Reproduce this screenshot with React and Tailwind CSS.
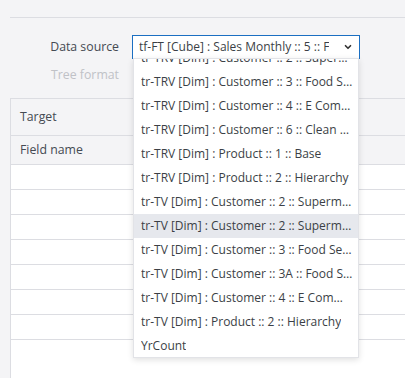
import { ChevronDown } from 'lucide-react'

const options = [
  'tr-TRV [Dim] : Customer :: 2 :: Supermarket',
  'tr-TRV [Dim] : Customer :: 3 :: Food Service',
  'tr-TRV [Dim] : Customer :: 4 :: E Commerce',
  'tr-TRV [Dim] : Customer :: 6 :: Clean Label',
  'tr-TRV [Dim] : Product :: 1 :: Base',
  'tr-TRV [Dim] : Product :: 2 :: Hierarchy',
  'tr-TV [Dim] : Customer :: 2 :: Supermarket',
  'tr-TV [Dim] : Customer :: 2 :: Supermarket A',
  'tr-TV [Dim] : Customer :: 3 :: Food Service',
  'tr-TV [Dim] : Customer :: 3A :: Food Service',
  'tr-TV [Dim] : Customer :: 4 :: E Commerce',
  'tr-TV [Dim] : Product :: 2 :: Hierarchy',
  'YrCount',
]

export default function App() {
  const selected = 7

  return (
    <div
      className="relative h-[378px] w-[405px] overflow-hidden bg-[#f4f4f6] pl-[10px] text-[12px] text-[#3b3f46]"
      style={{ fontFamily: '"Open Sans", "Noto Sans", sans-serif' }}
    >
      <div className="mt-[17px] border-t border-[#dcdde2]" />

      {/* Form */}
      <div className="pt-[17px]">
        <div className="flex items-center gap-[13px]">
          <div className="w-[109px] text-right text-[12.3px] text-[#454a52]">Data source</div>
          <div className="relative flex h-[24px] w-[228px] items-center border border-[#1b6fc2] bg-white pl-[6px]">
            <div className="w-[190px] overflow-hidden whitespace-nowrap">tf-FT [Cube] : Sales Monthly :: 5 :: Food</div>
            <ChevronDown className="ml-[14px] h-[10px] w-[10px] shrink-0 text-[#333]" strokeWidth={4} />
          </div>
        </div>
        <div className="mt-[4px] flex h-[24px] items-center">
          <div className="w-[109px] text-right text-[12.3px] text-[#c0c2c7]">Tree format</div>
        </div>
      </div>

      {/* Mapping table */}
      <div className="mt-[11px] border-l border-t border-[#dcdde2] bg-white text-[12.3px]">
        <div className="flex h-[37px] items-center border-b border-[#dcdde2] bg-[#f4f4f6] pl-[9px] text-[#454a52]">Target</div>
        <div className="flex h-[29px] items-center border-b border-[#dcdde2] bg-[#f4f4f6] pl-[9px] text-[#454a52]">Field name</div>
        {[0, 1, 2, 3, 4, 5, 6].map((i) => (
          <div key={i} className="h-[25px] border-b border-[#dcdde2]" />
        ))}
        <div className="h-[40px]" />
      </div>

      {/* Open dropdown */}
      <div className="absolute left-[133px] top-[58px] h-[300px] w-[226px] overflow-hidden border border-[#e2e3e7] bg-white shadow-[0_2px_6px_rgba(0,0,0,0.12)]">
        <div className="-mt-[13px]">
          {options.map((opt, i) => (
            <div
              key={i}
              className={`flex h-[24px] items-center pl-[7px] pr-[5px] ${i === selected ? 'bg-[#e6e8ed]' : ''}`}
            >
              <span className="truncate">{opt}</span>
            </div>
          ))}
        </div>
      </div>
    </div>
  )
}
